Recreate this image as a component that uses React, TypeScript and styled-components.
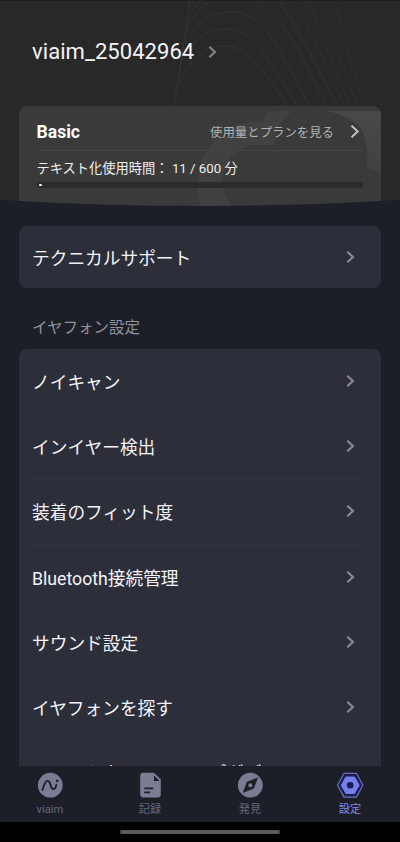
import React from "react";
import styled, { createGlobalStyle } from "styled-components";

const Global = createGlobalStyle`
  * { box-sizing: border-box; }
  body { margin: 0; background: #1c1f28; font-family: Roboto, "Noto Sans CJK JP", sans-serif; }
`;

const Screen = styled.div`
  width: 400px;
  height: 842px;
  display: flex;
  flex-direction: column;
  overflow: hidden;
  background: #1c1f28;
  color: #f4f4f8;
`;

const Hero = styled.header`
  position: relative;
  flex: none;
  height: 208px;
  padding: 0 19px;
  background: #282828;
  border-top: 1px solid #1d1e26;
  overflow: hidden;
`;

const Waves = styled.svg`
  position: absolute;
  left: 0;
  top: -1px;
`;

const Curve = styled.svg`
  position: absolute;
  left: 0;
  bottom: 0;
`;

const Profile = styled.div`
  position: relative;
  display: flex;
  align-items: center;
  gap: 14px;
  height: 105px;
  padding: 0 0 4px 13px;
  font-size: 22px;
  letter-spacing: 0.06px;
  line-height: 28px;
`;

const PlanCard = styled.section`
  position: relative;
  height: 110px;
  padding: 0 18px 0 17.5px;
  border-radius: 8px 8px 0 0;
  background: #3a3a3a;
  overflow: hidden;
`;

const Cloud = styled.svg`
  position: absolute;
  left: 0;
  top: 0;
`;

const PlanHead = styled.div`
  position: relative;
  display: flex;
  align-items: center;
  height: 45px;
  padding: 7px 3px 0 0;
  border-bottom: 1px solid #444444;
`;

const PlanName = styled.strong`
  flex: 1;
  font-size: 17.6px;
  font-weight: 700;
  color: #ffffff;
`;

const PlanLink = styled.span`
  margin-right: 16px;
  font-size: 12.4px;
  color: #b2b2b2;
`;

const Usage = styled.div`
  position: relative;
  height: 31px;
  padding-top: 8px;
  font-size: 13.25px;
  line-height: 20px;
  color: #eeeeee;
  white-space: pre;
`;

const Track = styled.div`
  position: relative;
  height: 6px;
  border-radius: 3px;
  background: #2c2c2c;
  padding: 2px;
`;

const Fill = styled.div`
  width: 3px;
  height: 2px;
  border-radius: 1px;
  background: #ffffff;
`;

const Content = styled.main`
  flex: 1;
  min-height: 0;
  overflow: hidden;
  padding: 18px 19px 0;
`;

const Group = styled.section`
  border-radius: 8px;
  background: #2c2e3a;
`;

const Row = styled.div<{ $height: number; $lift?: number }>`
  display: flex;
  align-items: center;
  justify-content: space-between;
  height: ${(p) => p.$height}px;
  margin: 0 20px 0 13px;
  padding: 0 6px ${(p) => p.$lift ?? 0}px 0;
  font-size: 17.7px;
  white-space: nowrap;

  & + & {
    border-top: 1px solid #313340;
  }
`;

const SectionTitle = styled.h2`
  margin: 0;
  height: 61px;
  padding: 29px 13px 0;
  font-size: 15.5px;
  line-height: 22px;
  font-weight: 400;
  color: #92939e;
`;

const TabBar = styled.nav`
  flex: none;
  display: grid;
  grid-template-columns: repeat(4, 1fr);
  height: 56px;
  background: #1c1f28;
`;

const Tab = styled.div<{ $active?: boolean }>`
  display: flex;
  flex-direction: column;
  align-items: center;
  padding-top: 6px;
  font-size: 11.2px;
  line-height: 16px;
  color: ${(p) => (p.$active ? "#858df0" : "#66677d")};

  svg { margin-bottom: 4px; }
`;

const SystemBar = styled.footer`
  flex: none;
  display: flex;
  justify-content: center;
  height: 20px;
  padding-top: 8px;
  background: #000000;
`;

const Handle = styled.div`
  width: 160px;
  height: 4px;
  border-radius: 2px;
  background: #5b5b5b;
`;

const Chevron = ({ color = "#888995" }: { color?: string }) => (
  <svg width="9" height="14" viewBox="0 0 9 14" fill="none" stroke={color} strokeWidth="2.2">
    <path d="M1.300 1.700 6.900 7l-5.600 5.300" />
  </svg>
);

const PlanChevron = () => (
  <svg width="10" height="15" viewBox="0 0 10 15" fill="none" stroke="#c4c4c4" strokeWidth="1.900">
    <path d="M1.500 1.800 7.700 7.500 1.500 13.200" />
  </svg>
);

const WaveIcon = () => (
  <svg width="26" height="26" viewBox="0 0 26 26" fill="none">
    <circle cx="13.300" cy="13.200" r="12.400" fill="#7b7b93" />
    <path d="M5.500 17.800C7 12.400 8.300 8.900 10.600 8.900c3.600 0 2.600 8.200 5.800 8.200 2.200 0 2.500-2.700 3-4.300" stroke="#1c1f28" strokeWidth="1.900" strokeLinecap="round" />
    <circle cx="20.200" cy="8.800" r="1.350" fill="#1c1f28" />
  </svg>
);

const NoteIcon = () => (
  <svg width="26" height="26" viewBox="0 0 26 26" fill="none">
    <path d="M6.200.8H17L23.800 7.300v15.300c0 1.800-1.200 3-3 3H6.200c-1.800 0-3-1.200-3-3V3.800c0-1.800 1.200-3 3-3Z" fill="#7b7b93" />
    <path d="M17 3.600v5.400h5.400" fill="#1c1f28" />
    <path d="M7.300 16.300h8.900M7.300 20.300h5.700" stroke="#1c1f28" strokeWidth="1.700" />
  </svg>
);

const CompassIcon = () => (
  <svg width="26" height="26" viewBox="0 0 26 26" fill="none">
    <circle cx="13.300" cy="13.200" r="12.400" fill="#7b7b93" />
    <path d="M20.500 6 16.500 16.400 6.100 20.400 10.100 10Z" fill="#1c1f28" stroke="#1c1f28" strokeWidth=".6" strokeLinejoin="round" />
    <circle cx="13.300" cy="13.200" r="2" fill="#7b7b93" />
  </svg>
);

const HexIcon = () => (
  <svg width="26" height="26" viewBox="0 0 26 26" fill="none" overflow="visible">
    <path d="M7 1.300h12.400L25.900 13.200l-6.500 11.900H7L.5 13.200Z" fill="#1b1e48" stroke="#6a71c4" strokeWidth="1.200" strokeLinejoin="round" />
    <path d="M8.900 5h8.600l4.700 8.200-4.700 8.200H8.900l-4.700-8.200Z" fill="#777ff0" stroke="#777ff0" strokeLinejoin="round" />
    <circle cx="13.200" cy="13.200" r="3.300" fill="#1b1e48" />
  </svg>
);

const earphoneSettings = [
  "ノイキャン",
  "インイヤー検出",
  "装着のフィット度",
  "Bluetooth接続管理",
  "サウンド設定",
  "イヤフォンを探す",
  "ファームウェアのアップグデート",
];

export default function App() {
  return (
    <Screen>
      <Global />
      <Hero>
        <Waves width="400" height="110" fill="none" stroke="#343434" strokeWidth="1">
          <path d="M173 110C179 75 185 35 190 0" />
          <path d="M176 90C183 70 200 46 224 46c28 0 45 34 66 64" />
          <path d="M179 68C187 45 204 29 226 29c32 0 47 42 74 81" />
          <path d="M182 49C190 28 207 12 231 12c40 0 53 55 82 98" />
          <path d="M185 35C190 20 199 8 213 0M257 0c30 17 49 67 71 110" />
          <path d="M187 24C191 13 195 6 201 0M278 0c20 26 41 73 62 110" />
          <path d="M294 0c17 29 35 76 53 110M308 0c14 31 29 78 44 110M321 0c12 32 24 78 39 110M334 0c9 32 20 78 32 110" opacity=".6" />
        </Waves>
        <Profile>
          <span>viaim_25042964</span>
          <Chevron color="#808085" />
        </Profile>
        <PlanCard>
          <Cloud width="362" height="110">
            <defs>
              <linearGradient id="cloud" x1="0" y1="0" x2="0" y2="1">
                <stop offset="0" stopColor="#484848" />
                <stop offset="1" stopColor="#424242" />
              </linearGradient>
            </defs>
            <path d="M184 110C178 94 176 76 181 61C185 49 190 39 198 32C206 24 214 19 224 17Q234 14 243 16L249 5H274Q263 13 259 22Q256 30 256 39H236Q224 41 214 49Q205 58 203 72Q202 88 214 100Z" fill="#414141" />
            <path d="M308 5H362V66L348 62Q350 42 344 26Q334 10 308 5Z" fill="url(#cloud)" />
          </Cloud>
          <PlanHead>
            <PlanName>Basic</PlanName>
            <PlanLink>使用量とプランを見る</PlanLink>
            <PlanChevron />
          </PlanHead>
          <Usage>テキスト化使用時間： 11 / 600 分</Usage>
          <Track><Fill /></Track>
        </PlanCard>
        <Curve width="400" height="10" viewBox="0 0 400 10">
          <path d="M0 2Q200 14 400 2V10H0Z" fill="#1c1f28" />
        </Curve>
      </Hero>
      <Content>
        <Group>
          <Row $height={62}><span>テクニカルサポート</span><Chevron /></Row>
        </Group>
        <SectionTitle>イヤフォン設定</SectionTitle>
        <Group>
          {earphoneSettings.map((label) => (
            <Row key={label} $height={65.1} $lift={1.6}><span>{label}</span><Chevron /></Row>
          ))}
        </Group>
      </Content>
      <TabBar>
        <Tab><WaveIcon />viaim</Tab>
        <Tab><NoteIcon />記録</Tab>
        <Tab><CompassIcon />発見</Tab>
        <Tab $active><HexIcon />設定</Tab>
      </TabBar>
      <SystemBar><Handle /></SystemBar>
    </Screen>
  );
}
